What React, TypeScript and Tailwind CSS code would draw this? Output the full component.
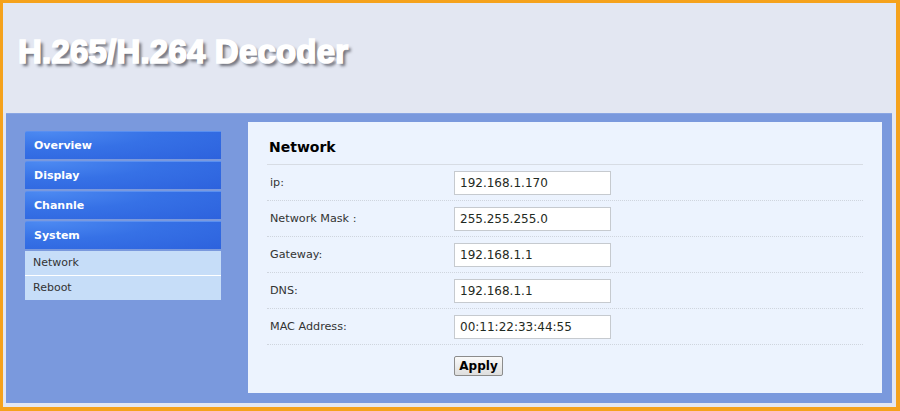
import React from "react";

const menu = ["Overview", "Display", "Channle", "System"];
const rows: [string, string][] = [
  ["ip:", "192.168.1.170"],
  ["Network Mask :", "255.255.255.0"],
  ["Gateway:", "192.168.1.1"],
  ["DNS:", "192.168.1.1"],
  ["MAC Address:", "00:11:22:33:44:55"],
];

export default function App() {
  return (
    <div className="w-[900px] h-[411px] box-border border-l-[3px] border-t-[3px] border-r-[4px] border-b-[4px] border-[#f5a21c] bg-[#e3e7f2] flex flex-col font-['DejaVu_Sans',sans-serif]">
      <div className="h-[110px] shrink-0 pl-[15px] pt-[32px]">
        <h1 className="font-['Liberation_Sans',Arial,sans-serif] font-bold text-[33px] leading-[33px] text-white [-webkit-text-stroke:1.6px_white] [text-shadow:3px_3px_3px_rgba(30,30,40,0.6)] tracking-[0.2px]">
          H.265/H.264 Decoder
        </h1>
      </div>
      <div className="flex-1 ml-[3px] mr-[4px] mb-[4px] bg-[#7a99dd] border-t border-[#8aa6e3] flex pl-[19px] pt-[8px] pr-[10px] pb-[10px]">
        <div className="w-[196px] shrink-0 mt-[9px] flex flex-col">
          {menu.map((m) => (
            <div
              key={m}
              className="h-[28px] mb-[2px] last:mb-0 rounded-tl-[2px] pl-[9px] pt-[1px] flex items-center text-white font-bold text-[11px] bg-[radial-gradient(ellipse_at_10%_0%,#4c89f1_0%,#3671e6_45%,#2d62dd_100%)] border-t border-[#5a8ff0]"
            >
              {m}
            </div>
          ))}
          <div className="h-[25px] pl-[8px] flex items-center text-[11px] text-[#333] bg-[#c6ddf8] border-b border-white">
            Network
          </div>
          <div className="h-[24px] pl-[8px] flex items-center text-[11px] text-[#333] bg-[#c6ddf8]">
            Reboot
          </div>
        </div>
        <div className="flex-1 ml-[27px] bg-[#ecf3fe] px-[19px]">
          <div className="pt-[17px] pb-[9px] leading-[16px] text-[14px] font-bold text-black border-b border-[#d7dce4] pl-[2px]">
            Network
          </div>
          {rows.map(([label, value]) => (
            <div
              key={label}
              className="h-[36px] flex items-center border-b border-dotted border-[#cfd5de]"
            >
              <div className="w-[187px] pl-[3px] pt-[2px] text-[11.2px] text-[#333]">{label}</div>
              <div className="w-[157px] h-[24px] bg-white border border-[#c6cacf] flex items-center pl-[5px] text-[12px] text-[#1f2a22]">
                {value}
              </div>
            </div>
          ))}
          <div className="flex pt-[11px] pl-[187px]">
            <button className="w-[49px] h-[20px] rounded-[2px] border border-[#8c8c8c] bg-[linear-gradient(#fafafa,#dedede)] text-[12px] font-bold text-black flex items-center justify-center leading-none">
              Apply
            </button>
          </div>
        </div>
      </div>
    </div>
  );
}
